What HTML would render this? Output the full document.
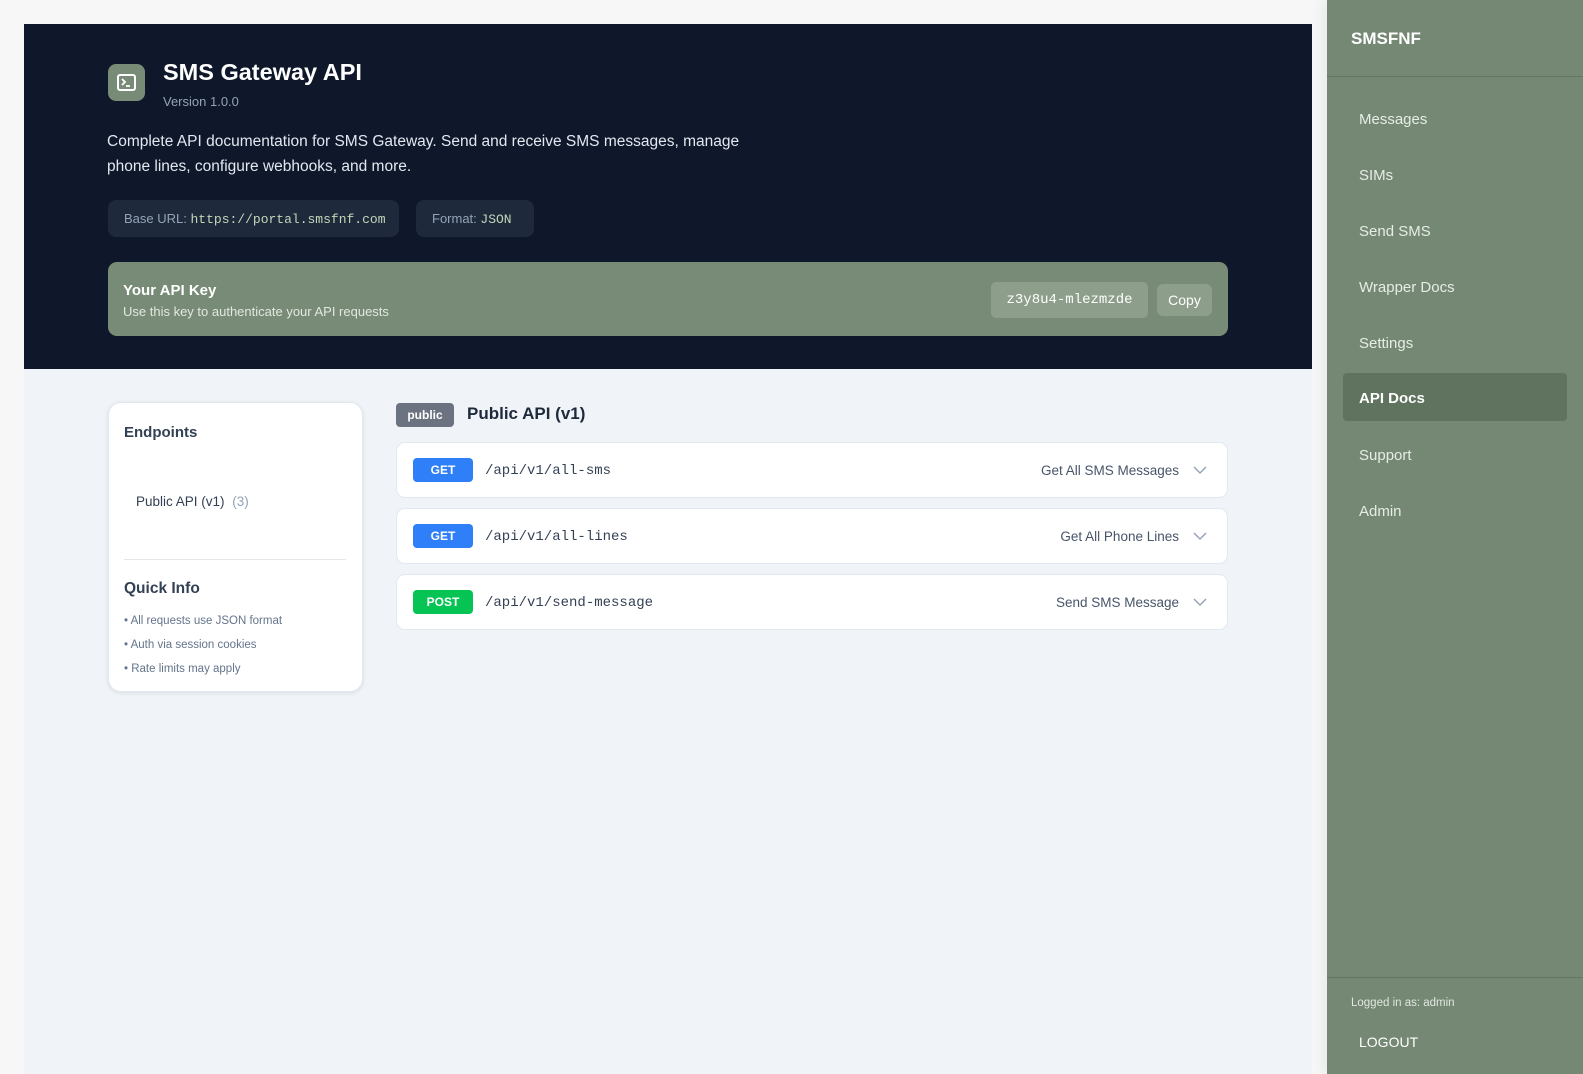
<!DOCTYPE html>
<html><head><meta charset="utf-8"><style>
*{box-sizing:border-box;margin:0;padding:0}
body{width:1583px;height:1074px;overflow:hidden;background:#f7f7f7;font-family:"Liberation Sans",sans-serif;position:relative}
.main{position:absolute;left:24px;top:24px;width:1288px;height:1050px;background:#f0f4f8}
.hdr{position:absolute;left:0;top:0;width:1288px;height:345px;background:#0f172a}
.abs{position:absolute}
.mono{font-family:"Liberation Mono",monospace}
.sb{position:absolute;left:1327px;top:0;width:256px;height:1074px;background:#748874;box-shadow:-6px 0 12px rgba(0,0,0,.05)}
.sb .it{position:absolute;left:32px;color:#e6ece6;font-size:15px}
.card{position:absolute;left:372px;width:832px;height:56px;background:#fff;border:1px solid #e2e8f0;border-radius:9px}
.badge{position:absolute;left:16px;top:15px;width:60px;height:24px;border-radius:4px;color:#fff;font-size:12px;font-weight:bold;text-align:center;line-height:24px}
.path{position:absolute;left:88px;top:20px;font-size:14px;color:#334155}
.desc{position:absolute;right:48px;top:20px;font-size:13.5px;color:#475569}
.chev{position:absolute;right:20px;top:20px}
</style></head><body>
<div class="main">
 <div class="hdr">
  <div class="abs" style="left:84px;top:40px;width:37px;height:37px;background:#788b76;border-radius:8px">
   <svg width="37" height="37" viewBox="0 0 37 37"><rect x="10" y="11" width="17" height="15" rx="2" fill="none" stroke="#fff" stroke-width="2"/><path d="M14 15l3 3-3 3M18 22h4" fill="none" stroke="#fff" stroke-width="1.8"/></svg>
  </div>
  <div class="abs" style="left:139px;top:35px;color:#fff;font-size:23.5px;font-weight:bold">SMS Gateway API</div>
  <div class="abs" style="left:139px;top:70px;color:#94a3b8;font-size:13px">Version 1.0.0</div>
  <div class="abs" style="left:83px;top:106px;width:655px;color:#e2e8f0;font-size:15.5px;line-height:24.5px">Complete API documentation for SMS Gateway. Send and receive SMS messages, manage phone lines, configure webhooks, and more.</div>
  <div class="abs" style="left:84px;top:176px;width:291px;height:37px;background:#1e293b;border-radius:8px;font-size:13px;color:#94a3b8;line-height:37px;padding-left:16px">Base URL: <span class="mono" style="color:#c5d6b8">https://portal.smsfnf.com</span></div>
  <div class="abs" style="left:392px;top:176px;width:118px;height:37px;background:#1e293b;border-radius:8px;font-size:13px;color:#94a3b8;line-height:37px;padding-left:16px">Format: <span class="mono" style="color:#c5d6b8">JSON</span></div>
  <div class="abs" style="left:84px;top:238px;width:1120px;height:74px;background:#788b76;border-radius:9px">
   <div class="abs" style="left:15px;top:20px;color:#fff;font-size:15px;font-weight:bold">Your API Key</div>
   <div class="abs" style="left:15px;top:42px;color:#e2e8e0;font-size:13px">Use this key to authenticate your API requests</div>
   <div class="abs mono" style="left:883px;top:20px;width:157px;height:36px;background:#8d9e8b;border-radius:5px;color:#fff;font-size:14px;line-height:36px;text-align:center">z3y8u4-mlezmzde</div>
   <div class="abs" style="left:1049px;top:22px;width:55px;height:32px;background:#8d9e8b;border-radius:6px;color:#fff;font-size:14px;line-height:32px;text-align:center">Copy</div>
  </div>
 </div>
 <div class="abs" style="left:84px;top:378px;width:255px;height:290px;background:#fff;border:1px solid #e2e8f0;border-radius:13px;box-shadow:0 1px 4px rgba(0,0,0,.1)">
  <div class="abs" style="left:15px;top:21px;font-size:15px;font-weight:bold;color:#334155">Endpoints</div>
  <div class="abs" style="left:27px;top:91px;font-size:13.5px;color:#334155">Public API (v1) <span style="color:#94a3b8;margin-left:4px">(3)</span></div>
  <div class="abs" style="left:15px;top:156px;width:222px;height:1px;background:#e5e7eb"></div>
  <div class="abs" style="left:15px;top:177px;font-size:15.5px;font-weight:bold;color:#334155">Quick Info</div>
  <div class="abs" style="left:15px;top:206px;font-size:11.5px;color:#64748b;line-height:24px">• All requests use JSON format<br>• Auth via session cookies<br>• Rate limits may apply</div>
 </div>
 <div class="abs" style="left:372px;top:379px;width:58px;height:24px;background:#6b7280;border-radius:4px;color:#fff;font-size:12px;font-weight:bold;line-height:24px;text-align:center">public</div>
 <div class="abs" style="left:443px;top:380px;font-size:17px;font-weight:bold;color:#1e293b">Public API (v1)</div>
 <div class="card" style="top:418px"><div class="badge" style="background:#2f7ff8">GET</div><div class="path mono">/api/v1/all-sms</div><div class="desc">Get All SMS Messages</div><svg class="chev" width="14" height="14"><path d="M1 4l6 6 6-6" fill="none" stroke="#94a3b8" stroke-width="1.5"/></svg></div>
 <div class="card" style="top:484px"><div class="badge" style="background:#2f7ff8">GET</div><div class="path mono">/api/v1/all-lines</div><div class="desc">Get All Phone Lines</div><svg class="chev" width="14" height="14"><path d="M1 4l6 6 6-6" fill="none" stroke="#94a3b8" stroke-width="1.5"/></svg></div>
 <div class="card" style="top:550px"><div class="badge" style="background:#05c454">POST</div><div class="path mono">/api/v1/send-message</div><div class="desc">Send SMS Message</div><svg class="chev" width="14" height="14"><path d="M1 4l6 6 6-6" fill="none" stroke="#94a3b8" stroke-width="1.5"/></svg></div>
</div>
<div class="sb">
 <div class="abs" style="left:24px;top:29px;color:#fff;font-size:17px;font-weight:bold">SMSFNF</div>
 <div class="abs" style="left:0;top:76px;width:256px;height:1px;background:#627662"></div>
 <div class="it" style="top:111px">Messages</div>
 <div class="it" style="top:167px">SIMs</div>
 <div class="it" style="top:223px">Send SMS</div>
 <div class="it" style="top:279px">Wrapper Docs</div>
 <div class="it" style="top:335px">Settings</div>
 <div class="abs" style="left:16px;top:373px;width:224px;height:48px;background:#5f735f;border-radius:4px"></div>
 <div class="it" style="top:390px;color:#fff;font-weight:bold">API Docs</div>
 <div class="it" style="top:447px">Support</div>
 <div class="it" style="top:503px">Admin</div>
 <div class="abs" style="left:0;top:977px;width:256px;height:1px;background:#627662"></div>
 <div class="abs" style="left:24px;top:997px;color:#e0e6e0;font-size:11.5px">Logged in as: admin</div>
 <div class="abs" style="left:32px;top:1034px;color:#fff;font-size:14px">LOGOUT</div>
</div>
</body></html>
